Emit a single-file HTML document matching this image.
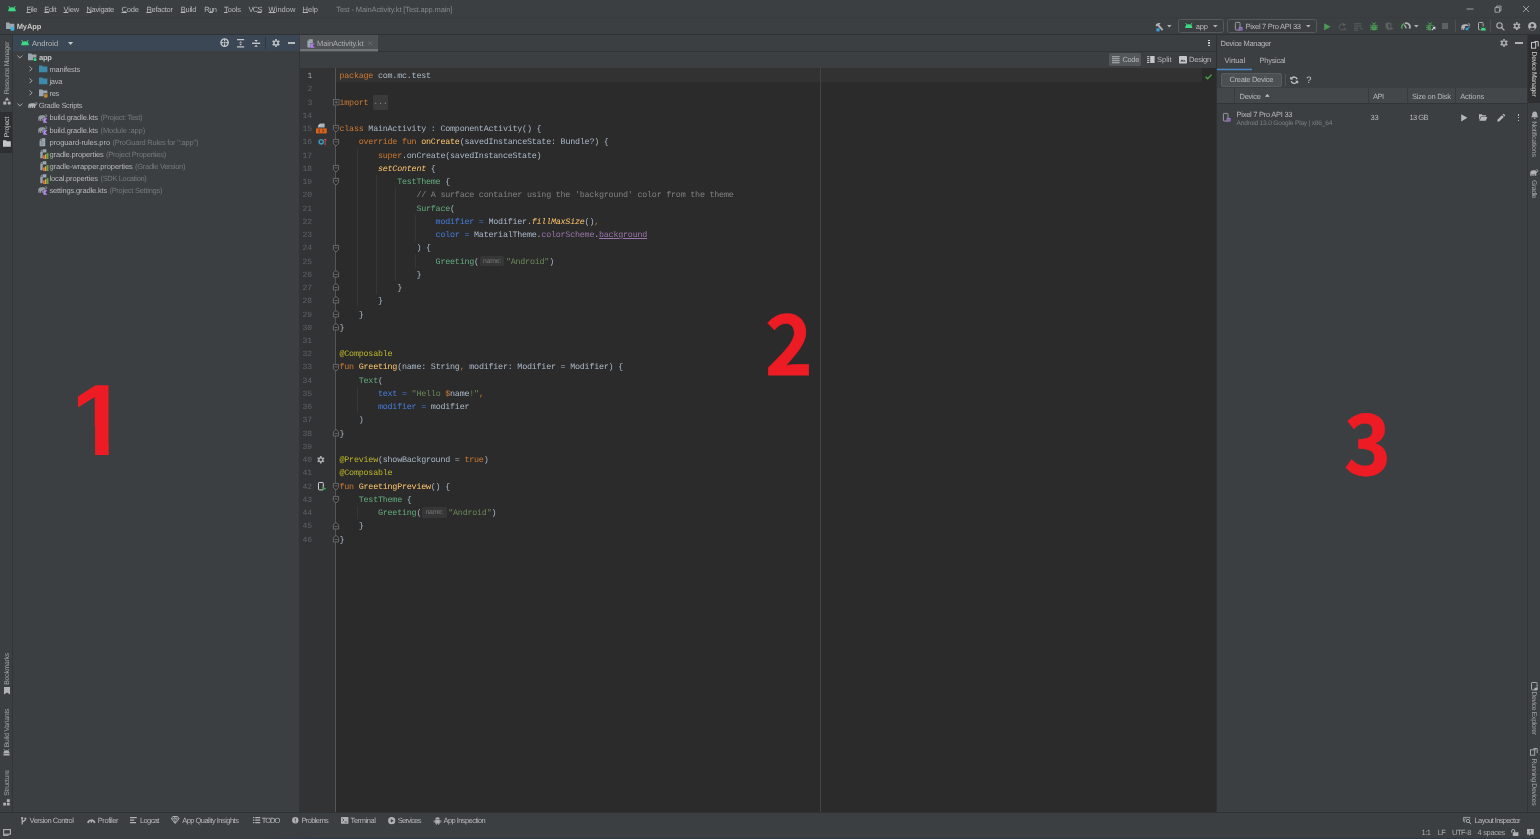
<!DOCTYPE html>
<html lang="en"><head><meta charset="utf-8"><title>Test - MainActivity.kt [Test.app.main]</title>
<style>
html,body{margin:0;padding:0}
body{width:1540px;height:839px;overflow:hidden;position:relative;background:#3c3f41;color:#b6b8ba;font:7.5px 'Liberation Sans',sans-serif;text-rendering:geometricPrecision;-webkit-font-smoothing:antialiased}
.t{position:absolute;white-space:pre}
svg{overflow:visible}
u{text-decoration-thickness:0.6px;text-underline-offset:0.4px}
</style></head><body>
<div id="root" style="position:absolute;left:0;top:0;width:1540px;height:839px;will-change:transform">
<div style="position:absolute;left:0px;top:34px;width:1540px;height:1px;background:#2f3233;"></div>
<div style="position:absolute;left:0px;top:17px;width:1540px;height:0.8px;background:#393c3e;"></div>
<div style="position:absolute;left:12px;top:35px;width:1px;height:777px;background:#323537;"></div>
<div style="position:absolute;left:13px;top:35px;width:286px;height:16px;background:#3b4754;"></div>
<div style="position:absolute;left:299px;top:51px;width:1px;height:761px;background:#323537;"></div>
<div style="position:absolute;left:300px;top:51px;width:916px;height:1px;background:#323537;"></div>
<div style="position:absolute;left:300px;top:68px;width:916px;height:744px;background:#2b2b2b;"></div>
<div style="position:absolute;left:300px;top:68px;width:35px;height:744px;background:#313335;"></div>
<div style="position:absolute;left:335px;top:68px;width:1px;height:744px;background:#555555;"></div>
<div style="position:absolute;left:336px;top:68px;width:866px;height:14px;background:#323232;"></div>
<div style="position:absolute;left:820px;top:68px;width:1px;height:744px;background:#434343;"></div>
<div style="position:absolute;left:1216px;top:35px;width:1px;height:777px;background:#2f3133;"></div>
<div style="position:absolute;left:1527px;top:35px;width:1px;height:777px;background:#323537;"></div>
<div style="position:absolute;left:0px;top:812px;width:1540px;height:1px;background:#2f3233;"></div>
<svg style="position:absolute;left:7.6px;top:5.9px;" width="8" height="5.5" viewBox="0 0 10 6.4" preserveAspectRatio="none"><path d="M0.3 6.2a4.7 4.7 0 0 1 9.4 0z" fill="#3ddc84"/><path d="M2.2 2.2L1.1 0.4M7.8 2.2L8.9 0.4" stroke="#3ddc84" stroke-width="1" stroke-linecap="round"/><circle cx="3" cy="4.2" r="0.32" fill="#3c3f41" opacity="0.6"/><circle cx="7" cy="4.2" r="0.32" fill="#3c3f41" opacity="0.6"/></svg>
<span class="t" style="left:26.50px;top:4.70px;line-height:10px;letter-spacing:-0.398px;"><u>F</u>ile</span>
<span class="t" style="left:44.30px;top:4.70px;line-height:10px;letter-spacing:-0.234px;"><u>E</u>dit</span>
<span class="t" style="left:63.50px;top:4.70px;line-height:10px;letter-spacing:-0.156px;"><u>V</u>iew</span>
<span class="t" style="left:86.40px;top:4.70px;line-height:10px;letter-spacing:-0.251px;"><u>N</u>avigate</span>
<span class="t" style="left:121.60px;top:4.70px;line-height:10px;letter-spacing:-0.209px;"><u>C</u>ode</span>
<span class="t" style="left:146.40px;top:4.70px;line-height:10px;letter-spacing:-0.257px;"><u>R</u>efactor</span>
<span class="t" style="left:180.70px;top:4.70px;line-height:10px;letter-spacing:-0.237px;"><u>B</u>uild</span>
<span class="t" style="left:204.30px;top:4.70px;line-height:10px;letter-spacing:-0.589px;">R<u>u</u>n</span>
<span class="t" style="left:224.00px;top:4.70px;line-height:10px;letter-spacing:-0.103px;"><u>T</u>ools</span>
<span class="t" style="left:248.50px;top:4.70px;line-height:10px;letter-spacing:-0.774px;">VC<u>S</u></span>
<span class="t" style="left:268.60px;top:4.70px;line-height:10px;letter-spacing:0.019px;"><u>W</u>indow</span>
<span class="t" style="left:302.60px;top:4.70px;line-height:10px;letter-spacing:-0.009px;"><u>H</u>elp</span>
<span class="t" style="left:336.30px;top:4.70px;line-height:10px;color:#85888a;letter-spacing:-0.125px;">Test - MainActivity.kt [Test.app.main]</span>
<svg style="position:absolute;left:1465.5px;top:5px;" width="8" height="8" viewBox="0 0 8 8" preserveAspectRatio="none"><path d="M0.5 4h7" stroke="#b4b6b8" stroke-width="0.8"/></svg>
<svg style="position:absolute;left:1493.5px;top:5px;" width="8" height="8" viewBox="0 0 8 8" preserveAspectRatio="none"><path d="M1 2.6h4.6v4.6H1zM2.4 2.6V1.1H7v4.6H5.6" fill="none" stroke="#b4b6b8" stroke-width="0.8"/></svg>
<svg style="position:absolute;left:1522px;top:5px;" width="8" height="8" viewBox="0 0 8 8" preserveAspectRatio="none"><path d="M1 1l6 6M7 1l-6 6" stroke="#b4b6b8" stroke-width="0.8"/></svg>
<svg style="position:absolute;left:5.8px;top:21.8px;" width="9" height="9" viewBox="0 0 9 9" preserveAspectRatio="none"><path d="M0 0.6h3.2l0.9 1.1H8.3v5.2H0z" fill="#9aa7b0"/><rect x="4.6" y="5" width="3.6" height="3.6" fill="#40b6e0"/></svg>
<span class="t" style="left:16.70px;top:21.80px;line-height:10px;color:#c8c8c8;font-weight:bold;letter-spacing:-0.080px;">MyApp</span>
<svg style="position:absolute;left:1153.5px;top:21.5px;" width="9.5" height="9.5" viewBox="0 0 9.5 9.5" preserveAspectRatio="none"><path d="M1.5 3.2C2.5 1.2 4.6 0.4 6.6 1.3L5.2 2.7L9.3 7.6L8 8.8L3.6 4L2.6 4.6z" fill="#afb1b3"/><rect x="2.4" y="6.2" width="3.2" height="3.2" fill="#389fd6"/></svg>
<svg style="position:absolute;left:1167.2px;top:25px;" width="4.6" height="2.6" viewBox="0 0 4.6 2.6" preserveAspectRatio="none"><path d="M0 0h4.6L2.3 2.6z" fill="#afb1b3"/></svg>
<div style="position:absolute;left:1178px;top:19.3px;width:43.8px;height:12.2px;border:0.8px solid #575a5c;border-radius:2.6px;background:#3c3f41"></div>
<svg style="position:absolute;left:1184.8px;top:22.8px;" width="7.6" height="5.2" viewBox="0 0 10 6.4" preserveAspectRatio="none"><path d="M0.3 6.2a4.7 4.7 0 0 1 9.4 0z" fill="#3ddc84"/><path d="M2.2 2.2L1.1 0.4M7.8 2.2L8.9 0.4" stroke="#3ddc84" stroke-width="1" stroke-linecap="round"/><circle cx="3" cy="4.2" r="0.32" fill="#3c3f41" opacity="0.6"/><circle cx="7" cy="4.2" r="0.32" fill="#3c3f41" opacity="0.6"/></svg>
<span class="t" style="left:1195.70px;top:21.60px;line-height:10px;letter-spacing:-0.105px;">app</span>
<svg style="position:absolute;left:1213.2px;top:25px;" width="4.6" height="2.6" viewBox="0 0 4.6 2.6" preserveAspectRatio="none"><path d="M0 0h4.6L2.3 2.6z" fill="#afb1b3"/></svg>
<div style="position:absolute;left:1227.2px;top:19.3px;width:87.6px;height:12.2px;border:0.8px solid #575a5c;border-radius:2.6px;background:#3c3f41"></div>
<svg style="position:absolute;left:1235px;top:21.8px;" width="8" height="9" viewBox="0 0 8 9" preserveAspectRatio="none"><rect x="0.4" y="0.4" width="4.6" height="7.6" rx="0.8" fill="none" stroke="#afb1b3" stroke-width="0.8"/><rect x="3.6" y="5" width="4" height="3.6" fill="#9876c8"/><path d="M4.4 6.9h2.4" stroke="#3c3f41" stroke-width="0.5"/></svg>
<span class="t" style="left:1245.50px;top:21.60px;line-height:10px;letter-spacing:-0.292px;">Pixel 7 Pro API 33</span>
<svg style="position:absolute;left:1305.8px;top:25px;" width="4.6" height="2.6" viewBox="0 0 4.6 2.6" preserveAspectRatio="none"><path d="M0 0h4.6L2.3 2.6z" fill="#afb1b3"/></svg>
<svg style="position:absolute;left:1324px;top:22.6px;" width="7" height="7.4" viewBox="0 0 7 7.4" preserveAspectRatio="none"><path d="M0.2 0.2L6.6 3.7L0.2 7.2z" fill="#499c54"/></svg>
<svg style="position:absolute;left:1338px;top:22px;" width="9" height="9" viewBox="0 0 9 9" preserveAspectRatio="none"><path d="M6.5 3.2A3 3 0 1 0 6.8 6.2" fill="none" stroke="#5e6163" stroke-width="0.9"/><path d="M5 0.8L7.8 2.6L5.2 4.4z" fill="#5e6163"/><path d="M6 8.6l1.2-2.6l1.2 2.6" fill="none" stroke="#5e6163" stroke-width="0.6"/></svg>
<svg style="position:absolute;left:1354.3px;top:22.5px;" width="8.5" height="8" viewBox="0 0 8.5 8" preserveAspectRatio="none"><path d="M0 0.8h7.6M0 3h7.6M0 5.2h4.6M0 7.2h4" stroke="#5e6163" stroke-width="0.9"/><path d="M6 5.2h2v2" fill="none" stroke="#5e6163" stroke-width="0.7"/></svg>
<svg style="position:absolute;left:1369.8px;top:21.8px;" width="8" height="8.6" viewBox="0 0 8 8.6" preserveAspectRatio="none"><path d="M2.2 0.3l1 1.2M5.8 0.3l-1 1.2" stroke="#499c54" stroke-width="0.8"/><path d="M2.3 2.6a1.7 1.5 0 0 1 3.4 0z" fill="#499c54"/><rect x="1.3" y="2.9" width="5.4" height="5.5" rx="2.4" fill="#499c54"/><path d="M0.1 3.6h1.6M6.3 3.6h1.6M0 5.6h1.6M6.4 5.6h1.6M0.3 7.8l1.4-0.7M7.7 7.8l-1.4-0.7" stroke="#499c54" stroke-width="0.9"/><path d="M2.9 4.5h2.2M2.9 6.2h2.2" stroke="#3c3f41" stroke-width="0.6" opacity="0.7"/></svg>
<svg style="position:absolute;left:1385px;top:22px;" width="9" height="9" viewBox="0 0 9 9" preserveAspectRatio="none"><path d="M0.5 1.2L3.5 0.2L6.4 1.2V4.8Q6.2 7 3.5 8.2Q0.7 7 0.5 4.8z" fill="#5e6163"/><path d="M3.5 1.6L5.2 2.2V4.6Q5 5.8 3.5 6.6z" fill="#3c3f41"/><path d="M5.2 4.4L8.8 6.6L5.2 8.8z" fill="#5e6163" stroke="#3c3f41" stroke-width="0.4"/></svg>
<svg style="position:absolute;left:1401px;top:22.2px;" width="9.4" height="7.4" viewBox="0 0 9.4 7.4" preserveAspectRatio="none"><path d="M1.1 6.6A3.7 3.7 0 0 1 3.3 1.5" fill="none" stroke="#499c54" stroke-width="1.7"/><path d="M3.9 1.3A3.7 3.7 0 0 1 8.4 6.6" fill="none" stroke="#afb1b3" stroke-width="1.7"/><path d="M3.4 2.6L5.4 6.4" stroke="#afb1b3" stroke-width="1.2"/></svg>
<svg style="position:absolute;left:1414.2px;top:25px;" width="4.6" height="2.6" viewBox="0 0 4.6 2.6" preserveAspectRatio="none"><path d="M0 0h4.6L2.3 2.6z" fill="#afb1b3"/></svg>
<svg style="position:absolute;left:1425.7px;top:21.8px;" width="8" height="8.6" viewBox="0 0 8 8.6" preserveAspectRatio="none"><path d="M2.2 0.3l1 1.2M5.8 0.3l-1 1.2" stroke="#499c54" stroke-width="0.8"/><path d="M2.3 2.6a1.7 1.5 0 0 1 3.4 0z" fill="#499c54"/><rect x="1.3" y="2.9" width="5.4" height="5.5" rx="2.4" fill="#499c54"/><path d="M0.1 3.6h1.6M6.3 3.6h1.6M0 5.6h1.6M6.4 5.6h1.6M0.3 7.8l1.4-0.7M7.7 7.8l-1.4-0.7" stroke="#499c54" stroke-width="0.9"/><path d="M2.9 4.5h2.2M2.9 6.2h2.2" stroke="#3c3f41" stroke-width="0.6" opacity="0.7"/></svg>
<svg style="position:absolute;left:1430.6px;top:26px;" width="5" height="5" viewBox="0 0 5 5" preserveAspectRatio="none"><rect width="5" height="5" fill="#3c3f41"/><path d="M0.8 4.2L3.4 1.6" stroke="#d4d6d8" stroke-width="1.1"/><path d="M1.4 0.8h3v3z" fill="#d4d6d8"/></svg>
<div style="position:absolute;left:1442.2px;top:23px;width:6px;height:6px;background:#5e6163;"></div>
<div style="position:absolute;left:1455px;top:19.8px;width:0.9px;height:11.8px;background:#4d5052;"></div>
<svg style="position:absolute;left:1460.8px;top:22.6px;" width="9.6" height="7.2" viewBox="0 0 10 8" preserveAspectRatio="none"><path d="M0.3 7.4V4.2C0.3 2.4 1.7 1.4 3.6 1.4H5.2C6.6 1.4 7.6 2 7.9 3.2C8.1 4 7.9 4.6 7.3 4.8V7.4H5.9V5.6H5.2V7.4H3.9V5.6H3.2V7.4H1.9V5.6H1.5V7.4z" fill="#afb1b3"/><path d="M7 3.6C8.3 3.8 9.2 3 9.2 2C9.2 1 8.3 0.5 7.6 0.9" fill="none" stroke="#afb1b3" stroke-width="0.9" stroke-linecap="round"/></svg>
<svg style="position:absolute;left:1465.4px;top:26.4px;" width="5.2" height="4.6" viewBox="0 0 5.2 4.6" preserveAspectRatio="none"><rect width="5.2" height="4.6" fill="#3c3f41"/><path d="M4.6 0.6L1.4 3.6" stroke="#389fd6" stroke-width="1.3"/><path d="M0.6 1.2v3h3.4z" fill="#389fd6"/></svg>
<svg style="position:absolute;left:1477.8px;top:22px;" width="8" height="8.6" viewBox="0 0 8 8.6" preserveAspectRatio="none"><rect x="0.5" y="0.5" width="4.6" height="7.2" rx="0.8" fill="none" stroke="#afb1b3" stroke-width="1"/><rect x="2.2" y="4.4" width="5.8" height="4.2" fill="#3c3f41"/><path d="M2.8 8.4a2.5 2.6 0 0 1 5 0z" fill="#3ddc84"/><path d="M3.6 6.2L3.1 5.3M7 6.2L7.5 5.3" stroke="#3ddc84" stroke-width="0.5"/></svg>
<div style="position:absolute;left:1490.4px;top:19.8px;width:0.9px;height:11.8px;background:#4d5052;"></div>
<svg style="position:absolute;left:1496.4px;top:21.8px;" width="9" height="9" viewBox="0 0 9 9" preserveAspectRatio="none"><circle cx="3.5" cy="3.5" r="2.7" fill="none" stroke="#afb1b3" stroke-width="1.1"/><path d="M5.5 5.5L8.4 8.4" stroke="#afb1b3" stroke-width="1.3"/></svg>
<svg style="position:absolute;left:1512.6px;top:21.9px;" width="7.6" height="8.2" viewBox="0 0 9.2 9.2" preserveAspectRatio="none"><g transform="translate(4.6 4.6)"><circle r="2.45" fill="none" stroke="#afb1b3" stroke-width="1.7"/><rect x="-1" y="-4.5" width="2" height="1.7" fill="#afb1b3" transform="rotate(0)"/><rect x="-1" y="-4.5" width="2" height="1.7" fill="#afb1b3" transform="rotate(60)"/><rect x="-1" y="-4.5" width="2" height="1.7" fill="#afb1b3" transform="rotate(120)"/><rect x="-1" y="-4.5" width="2" height="1.7" fill="#afb1b3" transform="rotate(180)"/><rect x="-1" y="-4.5" width="2" height="1.7" fill="#afb1b3" transform="rotate(240)"/><rect x="-1" y="-4.5" width="2" height="1.7" fill="#afb1b3" transform="rotate(300)"/></g></svg>
<svg style="position:absolute;left:1527.6px;top:21.8px;" width="8.6" height="8.6" viewBox="0 0 8.6 8.6" preserveAspectRatio="none"><circle cx="4.3" cy="4.3" r="4.2" fill="#afb1b3"/><circle cx="4.3" cy="3.2" r="1.5" fill="#3c3f41"/><path d="M1.5 6.9C2.2 5.4 6.4 5.4 7.1 6.9A3.8 3.8 0 0 1 1.5 6.9z" fill="#3c3f41"/></svg>
<span class="t" style="left:-18.05px;top:63.25px;width:52.50px;line-height:10px;transform:rotate(-90deg);transform-origin:50% 50%;font-size:6.9px;color:#a3a5a7;letter-spacing:-0.382px;">Resource Manager</span>
<svg style="position:absolute;left:2.9px;top:96.9px;" width="7.2" height="6.8" viewBox="0 0 7.2 6.8" preserveAspectRatio="none"><path d="M4 0.3L6.2 3.6H1.8z" fill="#afb1b3"/><rect x="0.3" y="4.6" width="3" height="3" fill="#afb1b3"/><circle cx="6.2" cy="6.1" r="1.6" fill="#afb1b3"/></svg>
<div style="position:absolute;left:0px;top:112px;width:12px;height:41px;background:#2d2f30;"></div>
<span class="t" style="left:-1.95px;top:122.35px;width:20.30px;line-height:10px;transform:rotate(-90deg);transform-origin:50% 50%;font-size:6.9px;color:#d0d0d0;letter-spacing:-0.165px;">Project</span>
<svg style="position:absolute;left:3px;top:140px;" width="7" height="5.8" viewBox="0 0 7 5.8" preserveAspectRatio="none"><path d="M0 0.3h3l0.9 1H7.8v5.4H0z" fill="#c4c6c8"/></svg>
<span class="t" style="left:-7.60px;top:663.80px;width:31.60px;line-height:10px;transform:rotate(-90deg);transform-origin:50% 50%;font-size:6.9px;color:#a3a5a7;letter-spacing:-0.319px;">Bookmarks</span>
<svg style="position:absolute;left:3.6px;top:686.6px;" width="6" height="7.6" viewBox="0 0 6 7.6" preserveAspectRatio="none"><path d="M0 0h6v7.4L3 5.4L0 7.4z" fill="#afb1b3"/></svg>
<span class="t" style="left:-11.05px;top:722.55px;width:38.50px;line-height:10px;transform:rotate(-90deg);transform-origin:50% 50%;font-size:6.9px;color:#a3a5a7;letter-spacing:-0.251px;">Build Variants</span>
<svg style="position:absolute;left:3.2px;top:748.8px;" width="7" height="6.6" viewBox="0 0 7 6.6" preserveAspectRatio="none"><path d="M1 0.2L2 1.6M6 0.2L5 1.6" stroke="#afb1b3" stroke-width="0.8"/><path d="M0.5 4.2a3 3 0 0 1 6 0z" fill="#afb1b3"/><rect x="0.5" y="4.7" width="6" height="1.8" fill="#afb1b3"/></svg>
<span class="t" style="left:-4.60px;top:777.60px;width:25.60px;line-height:10px;transform:rotate(-90deg);transform-origin:50% 50%;font-size:6.9px;color:#a3a5a7;letter-spacing:-0.263px;">Structure</span>
<svg style="position:absolute;left:3.4px;top:798.8px;" width="7" height="6.6" viewBox="0 0 7 6.6" preserveAspectRatio="none"><rect x="3.9" y="0.2" width="2.8" height="2.8" fill="#afb1b3"/><rect x="0.2" y="3.7" width="2.8" height="2.8" fill="#afb1b3"/><rect x="3.9" y="3.7" width="2.8" height="2.8" fill="#afb1b3"/></svg>
<svg style="position:absolute;left:21px;top:40.2px;" width="8" height="5.4" viewBox="0 0 10 6.4" preserveAspectRatio="none"><path d="M0.3 6.2a4.7 4.7 0 0 1 9.4 0z" fill="#3ddc84"/><path d="M2.2 2.2L1.1 0.4M7.8 2.2L8.9 0.4" stroke="#3ddc84" stroke-width="1" stroke-linecap="round"/><circle cx="3" cy="4.2" r="0.32" fill="#3b4754" opacity="0.6"/><circle cx="7" cy="4.2" r="0.32" fill="#3b4754" opacity="0.6"/></svg>
<span class="t" style="left:32.00px;top:38.60px;line-height:10px;letter-spacing:0.063px;">Android</span>
<svg style="position:absolute;left:67.6px;top:42px;" width="5.2" height="3" viewBox="0 0 5.2 3" preserveAspectRatio="none"><path d="M0 0h5.2L2.6 3z" fill="#c4c6c8"/></svg>
<svg style="position:absolute;left:220px;top:38.2px;" width="9.2" height="9.2" viewBox="0 0 9.2 9.2" preserveAspectRatio="none"><circle cx="4.6" cy="4.6" r="3.7" fill="none" stroke="#c4c7c9" stroke-width="1.3"/><circle cx="4.6" cy="4.6" r="1.1" fill="#c4c7c9"/><path d="M4.6 0.9v2.2M4.6 6.1v2.2M0.9 4.6h2.2M6.1 4.6h2.2" stroke="#c4c7c9" stroke-width="1.2"/></svg>
<svg style="position:absolute;left:237px;top:38.6px;" width="7.2" height="8.6" viewBox="0 0 7.2 8.6" preserveAspectRatio="none"><path d="M0 0.7h7.2M0 7.9h7.2" stroke="#c4c7c9" stroke-width="1.3"/><path d="M3.6 2.2L5 3.8H2.2zM3.6 6.4L5 4.8H2.2z" fill="#c4c7c9"/></svg>
<svg style="position:absolute;left:251.9px;top:38.6px;" width="8.2" height="8.6" viewBox="0 0 8.2 8.6" preserveAspectRatio="none"><path d="M0 4.3h8.2" stroke="#c4c7c9" stroke-width="1.4"/><path d="M4.1 2.9L5.9 0.9H2.3zM4.1 5.7L5.9 7.7H2.3z" fill="#c4c7c9"/></svg>
<div style="position:absolute;left:265.2px;top:36.8px;width:0.9px;height:12px;background:#303943;"></div>
<svg style="position:absolute;left:272px;top:38.6px;" width="8" height="8" viewBox="0 0 9.2 9.2" preserveAspectRatio="none"><g transform="translate(4.6 4.6)"><circle r="2.45" fill="none" stroke="#c4c7c9" stroke-width="1.7"/><rect x="-1" y="-4.5" width="2" height="1.7" fill="#c4c7c9" transform="rotate(0)"/><rect x="-1" y="-4.5" width="2" height="1.7" fill="#c4c7c9" transform="rotate(60)"/><rect x="-1" y="-4.5" width="2" height="1.7" fill="#c4c7c9" transform="rotate(120)"/><rect x="-1" y="-4.5" width="2" height="1.7" fill="#c4c7c9" transform="rotate(180)"/><rect x="-1" y="-4.5" width="2" height="1.7" fill="#c4c7c9" transform="rotate(240)"/><rect x="-1" y="-4.5" width="2" height="1.7" fill="#c4c7c9" transform="rotate(300)"/></g></svg>
<div style="position:absolute;left:287.9px;top:42.1px;width:7.4px;height:1.5px;background:#b6babd;"></div>
<svg style="position:absolute;left:17.1px;top:54.55px;" width="5.6" height="3.6" viewBox="0 0 5.6 3.6" preserveAspectRatio="none"><path d="M0.4 0.6L2.8 3L5.2 0.6" fill="none" stroke="#adb0b2" stroke-width="1"/></svg>
<svg style="position:absolute;left:28px;top:53.349999999999994px;" width="9" height="8.6" viewBox="0 0 9 8.6" preserveAspectRatio="none"><path d="M0 0.4h3.2l1 1.2H8.4v5.6H0z" fill="#9aa7b0"/><rect x="5" y="4.6" width="3.8" height="3.8" fill="#3c3f41"/><circle cx="7" cy="6.6" r="1.5" fill="#3ddc84"/></svg>
<span class="t" style="left:39.00px;top:53.05px;line-height:10px;color:#c8c8c8;font-weight:bold;letter-spacing:-0.215px;">app</span>
<svg style="position:absolute;left:28.7px;top:65.93499999999999px;" width="3.6" height="5.6" viewBox="0 0 3.6 5.6" preserveAspectRatio="none"><path d="M0.6 0.4L3 2.8L0.6 5.2" fill="none" stroke="#adb0b2" stroke-width="1"/></svg>
<svg style="position:absolute;left:38.8px;top:65.035px;" width="8.4" height="7.4" viewBox="0 0 8.4 7.4" preserveAspectRatio="none"><path d="M0 0.4h3.2l1 1.2H8.4v5.6H0z" fill="#3d8aaa"/></svg>
<span class="t" style="left:49.50px;top:65.13px;line-height:10px;letter-spacing:-0.179px;">manifests</span>
<svg style="position:absolute;left:28.7px;top:78.02px;" width="3.6" height="5.6" viewBox="0 0 3.6 5.6" preserveAspectRatio="none"><path d="M0.6 0.4L3 2.8L0.6 5.2" fill="none" stroke="#adb0b2" stroke-width="1"/></svg>
<svg style="position:absolute;left:38.8px;top:77.12px;" width="8.4" height="7.4" viewBox="0 0 8.4 7.4" preserveAspectRatio="none"><path d="M0 0.4h3.2l1 1.2H8.4v5.6H0z" fill="#3d8aaa"/></svg>
<span class="t" style="left:49.50px;top:77.22px;line-height:10px;letter-spacing:-0.316px;">java</span>
<svg style="position:absolute;left:28.7px;top:90.105px;" width="3.6" height="5.6" viewBox="0 0 3.6 5.6" preserveAspectRatio="none"><path d="M0.6 0.4L3 2.8L0.6 5.2" fill="none" stroke="#adb0b2" stroke-width="1"/></svg>
<svg style="position:absolute;left:38.8px;top:89.105px;" width="9" height="8.8" viewBox="0 0 9 8.8" preserveAspectRatio="none"><path d="M0 0.4h3.2l1 1.2H8.4v5.6H0z" fill="#9aa7b0"/><rect x="4.6" y="4" width="4" height="4.6" fill="#3c3f41"/><rect x="5.2" y="4.6" width="3.2" height="4" fill="#c9902f"/><path d="M5.2 5.8h3.2" stroke="#8a5f1a" stroke-width="0.6"/></svg>
<span class="t" style="left:49.50px;top:89.31px;line-height:10px;letter-spacing:-0.307px;">res</span>
<svg style="position:absolute;left:17.1px;top:102.89px;" width="5.6" height="3.6" viewBox="0 0 5.6 3.6" preserveAspectRatio="none"><path d="M0.4 0.6L2.8 3L5.2 0.6" fill="none" stroke="#adb0b2" stroke-width="1"/></svg>
<svg style="position:absolute;left:27.5px;top:102.49px;overflow:visible" width="9.8" height="6.6" viewBox="0 0 10 8" preserveAspectRatio="none"><path d="M0.3 7.4V4.2C0.3 2.4 1.7 1.4 3.6 1.4H5.2C6.6 1.4 7.6 2 7.9 3.2C8.1 4 7.9 4.6 7.3 4.8V7.4H5.9V5.6H5.2V7.4H3.9V5.6H3.2V7.4H1.9V5.6H1.5V7.4z" fill="#aeb1b3"/><path d="M7 3.6C8.3 3.8 9.2 3 9.2 2C9.2 1 8.3 0.5 7.6 0.9" fill="none" stroke="#aeb1b3" stroke-width="0.9" stroke-linecap="round"/></svg>
<span class="t" style="left:38.80px;top:101.39px;line-height:10px;letter-spacing:-0.288px;">Gradle Scripts</span>
<svg style="position:absolute;left:38.2px;top:113.77499999999999px;" width="9.6" height="9" viewBox="0 0 10 10" preserveAspectRatio="none"><path d="M0.3 7.4V4.2C0.3 2.4 1.7 1.4 3.6 1.4H5.2C6.6 1.4 7.6 2 7.9 3.2C8.1 4 7.9 4.6 7.3 4.8V7.4H5.9V5.6H5.2V7.4H3.9V5.6H3.2V7.4H1.9V5.6H1.5V7.4z" fill="#929a9f"/><path d="M7 3.6C8.3 3.8 9.2 3 9.2 2C9.2 1 8.3 0.5 7.6 0.9" fill="none" stroke="#929a9f" stroke-width="0.9" stroke-linecap="round"/><rect x="5" y="4.2" width="5" height="5.8" fill="#3c3f41"/><path d="M5.6 4.8v4.8h4.2L7.6 7.2L9.8 4.8z" fill="#b98af5"/></svg>
<span class="t" style="left:49.50px;top:113.47px;line-height:10px;letter-spacing:-0.128px;">build.gradle.kts</span>
<span class="t" style="left:100.60px;top:113.47px;line-height:10px;color:#76797b;letter-spacing:-0.302px;">(Project: Test)</span>
<svg style="position:absolute;left:38.2px;top:125.86px;" width="9.6" height="9" viewBox="0 0 10 10" preserveAspectRatio="none"><path d="M0.3 7.4V4.2C0.3 2.4 1.7 1.4 3.6 1.4H5.2C6.6 1.4 7.6 2 7.9 3.2C8.1 4 7.9 4.6 7.3 4.8V7.4H5.9V5.6H5.2V7.4H3.9V5.6H3.2V7.4H1.9V5.6H1.5V7.4z" fill="#929a9f"/><path d="M7 3.6C8.3 3.8 9.2 3 9.2 2C9.2 1 8.3 0.5 7.6 0.9" fill="none" stroke="#929a9f" stroke-width="0.9" stroke-linecap="round"/><rect x="5" y="4.2" width="5" height="5.8" fill="#3c3f41"/><path d="M5.6 4.8v4.8h4.2L7.6 7.2L9.8 4.8z" fill="#b98af5"/></svg>
<span class="t" style="left:49.50px;top:125.56px;line-height:10px;letter-spacing:-0.128px;">build.gradle.kts</span>
<span class="t" style="left:100.60px;top:125.56px;line-height:10px;color:#76797b;letter-spacing:-0.145px;">(Module :app)</span>
<svg style="position:absolute;left:39.4px;top:137.64499999999998px;" width="6.8" height="8.6" viewBox="0 0 7.4 9" preserveAspectRatio="none"><path d="M2.9 0.3H6.8V8.7H0.6V2.7H2.9z" fill="#9aa7b0"/><path d="M2.3 0.5V2.1H0.8z" fill="#9aa7b0"/><path d="M2 4h3.4M2 5.4h3.4M2 6.8h2.4" stroke="#7a8084" stroke-width="0.7"/></svg>
<span class="t" style="left:49.50px;top:137.64px;line-height:10px;letter-spacing:-0.067px;">proguard-rules.pro</span>
<span class="t" style="left:112.40px;top:137.64px;line-height:10px;color:#76797b;letter-spacing:-0.216px;">(ProGuard Rules for ":app")</span>
<svg style="position:absolute;left:39.6px;top:149.33px;" width="8.6" height="10" viewBox="0 0 8.6 10" preserveAspectRatio="none"><path d="M2.7 0.2H6.4V3.4H2.7V9.2H0.3V2.6H2.7z" fill="#9aa7b0"/><path d="M2.1 0.5V2H0.6z" fill="#9aa7b0"/><rect x="3.1" y="6.4" width="1.6" height="3.6" fill="#e8703a"/><rect x="4.9" y="5.2" width="1.6" height="4.8" fill="#e0a845"/><rect x="6.8" y="3.9" width="1.7" height="6.1" fill="#62a84c"/></svg>
<span class="t" style="left:49.50px;top:149.73px;line-height:10px;letter-spacing:-0.129px;">gradle.properties</span>
<span class="t" style="left:106.00px;top:149.73px;line-height:10px;color:#76797b;letter-spacing:-0.230px;">(Project Properties)</span>
<svg style="position:absolute;left:39.6px;top:161.415px;" width="8.6" height="10" viewBox="0 0 8.6 10" preserveAspectRatio="none"><path d="M2.7 0.2H6.4V3.4H2.7V9.2H0.3V2.6H2.7z" fill="#9aa7b0"/><path d="M2.1 0.5V2H0.6z" fill="#9aa7b0"/><rect x="3.1" y="6.4" width="1.6" height="3.6" fill="#e8703a"/><rect x="4.9" y="5.2" width="1.6" height="4.8" fill="#e0a845"/><rect x="6.8" y="3.9" width="1.7" height="6.1" fill="#62a84c"/></svg>
<span class="t" style="left:49.50px;top:161.81px;line-height:10px;letter-spacing:-0.091px;">gradle-wrapper.properties</span>
<span class="t" style="left:135.00px;top:161.81px;line-height:10px;color:#76797b;letter-spacing:-0.276px;">(Gradle Version)</span>
<svg style="position:absolute;left:39.6px;top:173.5px;" width="8.6" height="10" viewBox="0 0 8.6 10" preserveAspectRatio="none"><path d="M2.7 0.2H6.4V3.4H2.7V9.2H0.3V2.6H2.7z" fill="#9aa7b0"/><path d="M2.1 0.5V2H0.6z" fill="#9aa7b0"/><rect x="3.1" y="6.4" width="1.6" height="3.6" fill="#e8703a"/><rect x="4.9" y="5.2" width="1.6" height="4.8" fill="#e0a845"/><rect x="6.8" y="3.9" width="1.7" height="6.1" fill="#62a84c"/></svg>
<span class="t" style="left:49.50px;top:173.90px;line-height:10px;letter-spacing:-0.154px;">local.properties</span>
<span class="t" style="left:100.60px;top:173.90px;line-height:10px;color:#76797b;letter-spacing:-0.361px;">(SDK Location)</span>
<svg style="position:absolute;left:38.2px;top:186.28500000000003px;" width="9.6" height="9" viewBox="0 0 10 10" preserveAspectRatio="none"><path d="M0.3 7.4V4.2C0.3 2.4 1.7 1.4 3.6 1.4H5.2C6.6 1.4 7.6 2 7.9 3.2C8.1 4 7.9 4.6 7.3 4.8V7.4H5.9V5.6H5.2V7.4H3.9V5.6H3.2V7.4H1.9V5.6H1.5V7.4z" fill="#929a9f"/><path d="M7 3.6C8.3 3.8 9.2 3 9.2 2C9.2 1 8.3 0.5 7.6 0.9" fill="none" stroke="#929a9f" stroke-width="0.9" stroke-linecap="round"/><rect x="5" y="4.2" width="5" height="5.8" fill="#3c3f41"/><path d="M5.6 4.8v4.8h4.2L7.6 7.2L9.8 4.8z" fill="#b98af5"/></svg>
<span class="t" style="left:49.50px;top:185.99px;line-height:10px;letter-spacing:-0.155px;">settings.gradle.kts</span>
<span class="t" style="left:109.40px;top:185.99px;line-height:10px;color:#76797b;letter-spacing:-0.263px;">(Project Settings)</span>
<div style="position:absolute;left:300px;top:35px;width:77.8px;height:16.5px;background:#4e5254;"></div>
<div style="position:absolute;left:300px;top:49.4px;width:77.8px;height:1.7px;background:#70757a;"></div>
<svg style="position:absolute;left:306.8px;top:38.6px;" width="8" height="9" viewBox="0 0 8 9" preserveAspectRatio="none"><path d="M0.4 1.8L2.2 0.2h3.6V4H3.4V8.4H0.4z" fill="#9aa7b0"/><path d="M2.2 0.2V1.8H0.4" fill="#6e767c"/><path d="M3.4 4.4h4.4L5.6 6.6L7.8 8.8H3.4z" fill="#b57bf0"/></svg>
<span class="t" style="left:317.00px;top:38.60px;line-height:10px;color:#adafb1;letter-spacing:-0.058px;">MainActivity.kt</span>
<svg style="position:absolute;left:368px;top:41px;" width="4.6" height="4.6" viewBox="0 0 4.6 4.6" preserveAspectRatio="none"><path d="M0.5 0.5l3.6 3.6M4.1 0.5L0.5 4.1" stroke="#75787a" stroke-width="0.7"/></svg>
<div style="position:absolute;left:1208.4px;top:39.6px;width:1.4px;height:1.4px;background:#c4c6c8;"></div>
<div style="position:absolute;left:1208.4px;top:42.2px;width:1.4px;height:1.4px;background:#c4c6c8;"></div>
<div style="position:absolute;left:1208.4px;top:44.800000000000004px;width:1.4px;height:1.4px;background:#c4c6c8;"></div>
<div style="position:absolute;left:1109px;top:53.2px;width:32.2px;height:12.8px;background:#53575a;border-radius:1.6px"></div>
<svg style="position:absolute;left:1112.4px;top:55.8px;" width="7.6" height="7.4" viewBox="0 0 7.6 7.4" preserveAspectRatio="none"><path d="M0 0.7h7.6M0 2.7h7.6M0 4.7h7.6M0 6.7h7.6" stroke="#b4b6b8" stroke-width="1.1"/></svg>
<span class="t" style="left:1122.50px;top:55.30px;line-height:10px;letter-spacing:-0.359px;">Code</span>
<svg style="position:absolute;left:1147.4px;top:56px;" width="7.6" height="7.2" viewBox="0 0 7.6 7.2" preserveAspectRatio="none"><rect x="3.2" y="0" width="4.4" height="7" fill="#c4c6c8"/><path d="M0 0.7h2.4M0 2.7h2.4M0 4.7h2.4M0 6.5h2.4" stroke="#c4c6c8" stroke-width="1"/></svg>
<span class="t" style="left:1157.00px;top:55.30px;line-height:10px;letter-spacing:-0.019px;">Split</span>
<svg style="position:absolute;left:1179px;top:55.8px;" width="8" height="7.6" viewBox="0 0 8 7.6" preserveAspectRatio="none"><rect x="0" y="0" width="8" height="7.6" rx="0.8" fill="#c4c6c8"/><path d="M1.2 5.6L3 3.4L4.4 4.8L5.4 4L6.8 5.6z" fill="#3c3f41"/></svg>
<span class="t" style="left:1189.00px;top:55.30px;line-height:10px;letter-spacing:-0.227px;">Design</span>
<svg style="position:absolute;left:1204.7px;top:73.6px;" width="7.2" height="5.6" viewBox="0 0 7.2 5.6" preserveAspectRatio="none"><path d="M0.6 2.8L2.6 4.8L6.6 0.6" fill="none" stroke="#4aa84a" stroke-width="1.3"/></svg>
<span class="t" style="left:307.38px;top:70.10px;line-height:13px;font-size:8.03px;color:#a4a3a3;font-family:'Liberation Mono',monospace;">1</span>
<span class="t" style="left:307.38px;top:83.34px;line-height:13px;font-size:8.03px;color:#606366;font-family:'Liberation Mono',monospace;">2</span>
<span class="t" style="left:307.38px;top:96.59px;line-height:13px;font-size:8.03px;color:#606366;font-family:'Liberation Mono',monospace;">3</span>
<span class="t" style="left:302.56px;top:109.83px;line-height:13px;font-size:8.03px;color:#606366;font-family:'Liberation Mono',monospace;letter-spacing:0.008px;">14</span>
<span class="t" style="left:302.56px;top:123.08px;line-height:13px;font-size:8.03px;color:#606366;font-family:'Liberation Mono',monospace;letter-spacing:0.008px;">15</span>
<span class="t" style="left:302.56px;top:136.32px;line-height:13px;font-size:8.03px;color:#606366;font-family:'Liberation Mono',monospace;letter-spacing:0.008px;">16</span>
<span class="t" style="left:302.56px;top:149.57px;line-height:13px;font-size:8.03px;color:#606366;font-family:'Liberation Mono',monospace;letter-spacing:0.008px;">17</span>
<span class="t" style="left:302.56px;top:162.81px;line-height:13px;font-size:8.03px;color:#606366;font-family:'Liberation Mono',monospace;letter-spacing:0.008px;">18</span>
<span class="t" style="left:302.56px;top:176.06px;line-height:13px;font-size:8.03px;color:#606366;font-family:'Liberation Mono',monospace;letter-spacing:0.008px;">19</span>
<span class="t" style="left:302.56px;top:189.30px;line-height:13px;font-size:8.03px;color:#606366;font-family:'Liberation Mono',monospace;letter-spacing:0.008px;">20</span>
<span class="t" style="left:302.56px;top:202.55px;line-height:13px;font-size:8.03px;color:#606366;font-family:'Liberation Mono',monospace;letter-spacing:0.008px;">21</span>
<span class="t" style="left:302.56px;top:215.79px;line-height:13px;font-size:8.03px;color:#606366;font-family:'Liberation Mono',monospace;letter-spacing:0.008px;">22</span>
<span class="t" style="left:302.56px;top:229.04px;line-height:13px;font-size:8.03px;color:#606366;font-family:'Liberation Mono',monospace;letter-spacing:0.008px;">23</span>
<span class="t" style="left:302.56px;top:242.28px;line-height:13px;font-size:8.03px;color:#606366;font-family:'Liberation Mono',monospace;letter-spacing:0.008px;">24</span>
<span class="t" style="left:302.56px;top:255.53px;line-height:13px;font-size:8.03px;color:#606366;font-family:'Liberation Mono',monospace;letter-spacing:0.008px;">25</span>
<span class="t" style="left:302.56px;top:268.77px;line-height:13px;font-size:8.03px;color:#606366;font-family:'Liberation Mono',monospace;letter-spacing:0.008px;">26</span>
<span class="t" style="left:302.56px;top:282.02px;line-height:13px;font-size:8.03px;color:#606366;font-family:'Liberation Mono',monospace;letter-spacing:0.008px;">27</span>
<span class="t" style="left:302.56px;top:295.26px;line-height:13px;font-size:8.03px;color:#606366;font-family:'Liberation Mono',monospace;letter-spacing:0.008px;">28</span>
<span class="t" style="left:302.56px;top:308.51px;line-height:13px;font-size:8.03px;color:#606366;font-family:'Liberation Mono',monospace;letter-spacing:0.008px;">29</span>
<span class="t" style="left:302.56px;top:321.75px;line-height:13px;font-size:8.03px;color:#606366;font-family:'Liberation Mono',monospace;letter-spacing:0.008px;">30</span>
<span class="t" style="left:302.56px;top:335.00px;line-height:13px;font-size:8.03px;color:#606366;font-family:'Liberation Mono',monospace;letter-spacing:0.008px;">31</span>
<span class="t" style="left:302.56px;top:348.25px;line-height:13px;font-size:8.03px;color:#606366;font-family:'Liberation Mono',monospace;letter-spacing:0.008px;">32</span>
<span class="t" style="left:302.56px;top:361.49px;line-height:13px;font-size:8.03px;color:#606366;font-family:'Liberation Mono',monospace;letter-spacing:0.008px;">33</span>
<span class="t" style="left:302.56px;top:374.74px;line-height:13px;font-size:8.03px;color:#606366;font-family:'Liberation Mono',monospace;letter-spacing:0.008px;">34</span>
<span class="t" style="left:302.56px;top:387.98px;line-height:13px;font-size:8.03px;color:#606366;font-family:'Liberation Mono',monospace;letter-spacing:0.008px;">35</span>
<span class="t" style="left:302.56px;top:401.23px;line-height:13px;font-size:8.03px;color:#606366;font-family:'Liberation Mono',monospace;letter-spacing:0.008px;">36</span>
<span class="t" style="left:302.56px;top:414.47px;line-height:13px;font-size:8.03px;color:#606366;font-family:'Liberation Mono',monospace;letter-spacing:0.008px;">37</span>
<span class="t" style="left:302.56px;top:427.71px;line-height:13px;font-size:8.03px;color:#606366;font-family:'Liberation Mono',monospace;letter-spacing:0.008px;">38</span>
<span class="t" style="left:302.56px;top:440.96px;line-height:13px;font-size:8.03px;color:#606366;font-family:'Liberation Mono',monospace;letter-spacing:0.008px;">39</span>
<span class="t" style="left:302.56px;top:454.20px;line-height:13px;font-size:8.03px;color:#606366;font-family:'Liberation Mono',monospace;letter-spacing:0.008px;">40</span>
<span class="t" style="left:302.56px;top:467.45px;line-height:13px;font-size:8.03px;color:#606366;font-family:'Liberation Mono',monospace;letter-spacing:0.008px;">41</span>
<span class="t" style="left:302.56px;top:480.69px;line-height:13px;font-size:8.03px;color:#606366;font-family:'Liberation Mono',monospace;letter-spacing:0.008px;">42</span>
<span class="t" style="left:302.56px;top:493.94px;line-height:13px;font-size:8.03px;color:#606366;font-family:'Liberation Mono',monospace;letter-spacing:0.008px;">43</span>
<span class="t" style="left:302.56px;top:507.19px;line-height:13px;font-size:8.03px;color:#606366;font-family:'Liberation Mono',monospace;letter-spacing:0.008px;">44</span>
<span class="t" style="left:302.56px;top:520.43px;line-height:13px;font-size:8.03px;color:#606366;font-family:'Liberation Mono',monospace;letter-spacing:0.008px;">45</span>
<span class="t" style="left:302.56px;top:533.68px;line-height:13px;font-size:8.03px;color:#606366;font-family:'Liberation Mono',monospace;letter-spacing:0.008px;">46</span>
<div style="font:8.4px 'Liberation Mono',monospace;color:#a9b7c6;letter-spacing:-0.2208px"><div style="position:absolute;left:339.5px;top:70.10px;height:13px;line-height:13px;white-space:pre"><span style="color:#cc7832;">package</span> com.mc.test</div>
<div style="position:absolute;left:339.5px;top:96.59px;height:13px;line-height:13px;white-space:pre"><span style="color:#cc7832;">import</span> <span style="color:#a9b7c6;background:#3a3a3a;color:#8c8c8c;padding:2.3px 0;">...</span></div>
<div style="position:absolute;left:339.5px;top:123.08px;height:13px;line-height:13px;white-space:pre"><span style="color:#cc7832;">class</span> MainActivity : ComponentActivity() {</div>
<div style="position:absolute;left:339.5px;top:136.32px;height:13px;line-height:13px;white-space:pre">    <span style="color:#cc7832;">override fun</span> <span style="color:#ffc66d;">onCreate</span>(savedInstanceState: Bundle?) {</div>
<div style="position:absolute;left:339.5px;top:149.57px;height:13px;line-height:13px;white-space:pre">        <span style="color:#cc7832;">super</span>.onCreate(savedInstanceState)</div>
<div style="position:absolute;left:339.5px;top:162.81px;height:13px;line-height:13px;white-space:pre">        <span style="color:#ffc66d;font-style:italic;">setContent</span> {</div>
<div style="position:absolute;left:339.5px;top:176.06px;height:13px;line-height:13px;white-space:pre">            <span style="color:#62a87c;">TestTheme</span> {</div>
<div style="position:absolute;left:339.5px;top:189.30px;height:13px;line-height:13px;white-space:pre">                <span style="color:#808080;">// A surface container using the 'background' color from the theme</span></div>
<div style="position:absolute;left:339.5px;top:202.55px;height:13px;line-height:13px;white-space:pre">                <span style="color:#62a87c;">Surface</span>(</div>
<div style="position:absolute;left:339.5px;top:215.79px;height:13px;line-height:13px;white-space:pre">                    <span style="color:#467cda;">modifier =</span> Modifier.<span style="color:#ffc66d;font-style:italic;">fillMaxSize</span>()<span style="color:#cc7832;">,</span></div>
<div style="position:absolute;left:339.5px;top:229.04px;height:13px;line-height:13px;white-space:pre">                    <span style="color:#467cda;">color =</span> MaterialTheme.<span style="color:#9876aa;">colorScheme</span>.<span style="color:#9876aa;text-decoration:underline;text-decoration-thickness:0.6px;text-underline-offset:1px;">background</span></div>
<div style="position:absolute;left:339.5px;top:242.28px;height:13px;line-height:13px;white-space:pre">                ) {</div>
<div style="position:absolute;left:339.5px;top:255.53px;height:13px;line-height:13px;white-space:pre">                    <span style="color:#62a87c;">Greeting</span>(<span style="display:inline-block;width:27.0px;height:10.4px;vertical-align:middle;position:relative;top:-0.6px"><span style="position:absolute;left:1px;top:0;width:24.4px;height:10.4px;background:#363636;border-radius:1.8px;font:6.9px 'Liberation Sans',sans-serif;line-height:12.6px;color:#747678;text-align:center;letter-spacing:-0.25px">name:</span></span><span style="color:#6a8759;">"Android"</span>)</div>
<div style="position:absolute;left:339.5px;top:268.77px;height:13px;line-height:13px;white-space:pre">                }</div>
<div style="position:absolute;left:339.5px;top:282.02px;height:13px;line-height:13px;white-space:pre">            }</div>
<div style="position:absolute;left:339.5px;top:295.26px;height:13px;line-height:13px;white-space:pre">        }</div>
<div style="position:absolute;left:339.5px;top:308.51px;height:13px;line-height:13px;white-space:pre">    }</div>
<div style="position:absolute;left:339.5px;top:321.75px;height:13px;line-height:13px;white-space:pre">}</div>
<div style="position:absolute;left:339.5px;top:348.25px;height:13px;line-height:13px;white-space:pre"><span style="color:#bbb529;">@Composable</span></div>
<div style="position:absolute;left:339.5px;top:361.49px;height:13px;line-height:13px;white-space:pre"><span style="color:#cc7832;">fun</span> <span style="color:#ffc66d;">Greeting</span>(name: String<span style="color:#cc7832;">,</span> modifier: Modifier = Modifier) {</div>
<div style="position:absolute;left:339.5px;top:374.74px;height:13px;line-height:13px;white-space:pre">    <span style="color:#62a87c;">Text</span>(</div>
<div style="position:absolute;left:339.5px;top:387.98px;height:13px;line-height:13px;white-space:pre">        <span style="color:#467cda;">text =</span> <span style="color:#6a8759;">"Hello </span><span style="color:#cc7832;">$</span>name<span style="color:#6a8759;">!"</span><span style="color:#cc7832;">,</span></div>
<div style="position:absolute;left:339.5px;top:401.23px;height:13px;line-height:13px;white-space:pre">        <span style="color:#467cda;">modifier =</span> modifier</div>
<div style="position:absolute;left:339.5px;top:414.47px;height:13px;line-height:13px;white-space:pre">    )</div>
<div style="position:absolute;left:339.5px;top:427.71px;height:13px;line-height:13px;white-space:pre">}</div>
<div style="position:absolute;left:339.5px;top:454.20px;height:13px;line-height:13px;white-space:pre"><span style="color:#bbb529;">@Preview</span>(showBackground = <span style="color:#cc7832;">true</span>)</div>
<div style="position:absolute;left:339.5px;top:467.45px;height:13px;line-height:13px;white-space:pre"><span style="color:#bbb529;">@Composable</span></div>
<div style="position:absolute;left:339.5px;top:480.69px;height:13px;line-height:13px;white-space:pre"><span style="color:#cc7832;">fun</span> <span style="color:#ffc66d;">GreetingPreview</span>() {</div>
<div style="position:absolute;left:339.5px;top:493.94px;height:13px;line-height:13px;white-space:pre">    <span style="color:#62a87c;">TestTheme</span> {</div>
<div style="position:absolute;left:339.5px;top:507.19px;height:13px;line-height:13px;white-space:pre">        <span style="color:#62a87c;">Greeting</span>(<span style="display:inline-block;width:27.0px;height:10.4px;vertical-align:middle;position:relative;top:-0.6px"><span style="position:absolute;left:1px;top:0;width:24.4px;height:10.4px;background:#363636;border-radius:1.8px;font:6.9px 'Liberation Sans',sans-serif;line-height:12.6px;color:#747678;text-align:center;letter-spacing:-0.25px">name:</span></span><span style="color:#6a8759;">"Android"</span>)</div>
<div style="position:absolute;left:339.5px;top:520.43px;height:13px;line-height:13px;white-space:pre">    }</div>
<div style="position:absolute;left:339.5px;top:533.68px;height:13px;line-height:13px;white-space:pre">}</div></div>
<div style="position:absolute;left:356.5px;top:148.3475px;width:1px;height:158.93999999999997px;background:#373737;"></div>
<div style="position:absolute;left:376.0px;top:174.83749999999998px;width:1px;height:119.20499999999998px;background:#373737;"></div>
<div style="position:absolute;left:395.0px;top:188.08249999999998px;width:1px;height:92.71499999999997px;background:#373737;"></div>
<div style="position:absolute;left:414.5px;top:214.5725px;width:1px;height:26.49000000000001px;background:#373737;"></div>
<div style="position:absolute;left:414.5px;top:254.30749999999995px;width:1px;height:13.245000000000005px;background:#373737;"></div>
<div style="position:absolute;left:356.5px;top:386.7575px;width:1px;height:26.49000000000001px;background:#373737;"></div>
<div style="position:absolute;left:356.5px;top:505.96250000000003px;width:1px;height:13.244999999999948px;background:#373737;"></div>
<svg style="position:absolute;left:332.9px;top:98.99px;" width="6.4" height="6.4" viewBox="0 0 6.4 6.4" preserveAspectRatio="none"><rect x="0.4" y="0.4" width="5.6" height="5.6" fill="#2b2b2b" stroke="#77797b" stroke-width="0.7"/><path d="M1.6 3.2h3.2M3.2 1.6v3.2" stroke="#77797b" stroke-width="0.7"/></svg>
<svg style="position:absolute;left:333px;top:125.47999999999999px;" width="6" height="7.4" viewBox="0 0 6 7.4" preserveAspectRatio="none"><path d="M0.4 0.4h5.2v4.2L3 7L0.4 4.6z" fill="#2b2b2b" stroke="#77797b" stroke-width="0.8"/><path d="M1.6 2.9h2.8" stroke="#77797b" stroke-width="0.8"/></svg>
<svg style="position:absolute;left:333px;top:138.725px;" width="6" height="7.4" viewBox="0 0 6 7.4" preserveAspectRatio="none"><path d="M0.4 0.4h5.2v4.2L3 7L0.4 4.6z" fill="#2b2b2b" stroke="#77797b" stroke-width="0.8"/><path d="M1.6 2.9h2.8" stroke="#77797b" stroke-width="0.8"/></svg>
<svg style="position:absolute;left:333px;top:165.21499999999997px;" width="6" height="7.4" viewBox="0 0 6 7.4" preserveAspectRatio="none"><path d="M0.4 0.4h5.2v4.2L3 7L0.4 4.6z" fill="#2b2b2b" stroke="#77797b" stroke-width="0.8"/><path d="M1.6 2.9h2.8" stroke="#77797b" stroke-width="0.8"/></svg>
<svg style="position:absolute;left:333px;top:178.45999999999998px;" width="6" height="7.4" viewBox="0 0 6 7.4" preserveAspectRatio="none"><path d="M0.4 0.4h5.2v4.2L3 7L0.4 4.6z" fill="#2b2b2b" stroke="#77797b" stroke-width="0.8"/><path d="M1.6 2.9h2.8" stroke="#77797b" stroke-width="0.8"/></svg>
<svg style="position:absolute;left:333px;top:244.685px;" width="6" height="7.4" viewBox="0 0 6 7.4" preserveAspectRatio="none"><path d="M0.4 0.4h5.2v4.2L3 7L0.4 4.6z" fill="#2b2b2b" stroke="#77797b" stroke-width="0.8"/><path d="M1.6 2.9h2.8" stroke="#77797b" stroke-width="0.8"/></svg>
<svg style="position:absolute;left:333px;top:363.89px;" width="6" height="7.4" viewBox="0 0 6 7.4" preserveAspectRatio="none"><path d="M0.4 0.4h5.2v4.2L3 7L0.4 4.6z" fill="#2b2b2b" stroke="#77797b" stroke-width="0.8"/><path d="M1.6 2.9h2.8" stroke="#77797b" stroke-width="0.8"/></svg>
<svg style="position:absolute;left:333px;top:483.09499999999997px;" width="6" height="7.4" viewBox="0 0 6 7.4" preserveAspectRatio="none"><path d="M0.4 0.4h5.2v4.2L3 7L0.4 4.6z" fill="#2b2b2b" stroke="#77797b" stroke-width="0.8"/><path d="M1.6 2.9h2.8" stroke="#77797b" stroke-width="0.8"/></svg>
<svg style="position:absolute;left:333px;top:496.34px;" width="6" height="7.4" viewBox="0 0 6 7.4" preserveAspectRatio="none"><path d="M0.4 0.4h5.2v4.2L3 7L0.4 4.6z" fill="#2b2b2b" stroke="#77797b" stroke-width="0.8"/><path d="M1.6 2.9h2.8" stroke="#77797b" stroke-width="0.8"/></svg>
<svg style="position:absolute;left:333px;top:269.97499999999997px;" width="6" height="7.4" viewBox="0 0 6 7.4" preserveAspectRatio="none"><path d="M0.4 7h5.2v-4.2L3 0.4L0.4 2.8z" fill="#2b2b2b" stroke="#77797b" stroke-width="0.8"/><path d="M1.6 4.5h2.8" stroke="#77797b" stroke-width="0.8"/></svg>
<svg style="position:absolute;left:333px;top:283.21999999999997px;" width="6" height="7.4" viewBox="0 0 6 7.4" preserveAspectRatio="none"><path d="M0.4 7h5.2v-4.2L3 0.4L0.4 2.8z" fill="#2b2b2b" stroke="#77797b" stroke-width="0.8"/><path d="M1.6 4.5h2.8" stroke="#77797b" stroke-width="0.8"/></svg>
<svg style="position:absolute;left:333px;top:296.465px;" width="6" height="7.4" viewBox="0 0 6 7.4" preserveAspectRatio="none"><path d="M0.4 7h5.2v-4.2L3 0.4L0.4 2.8z" fill="#2b2b2b" stroke="#77797b" stroke-width="0.8"/><path d="M1.6 4.5h2.8" stroke="#77797b" stroke-width="0.8"/></svg>
<svg style="position:absolute;left:333px;top:309.71px;" width="6" height="7.4" viewBox="0 0 6 7.4" preserveAspectRatio="none"><path d="M0.4 7h5.2v-4.2L3 0.4L0.4 2.8z" fill="#2b2b2b" stroke="#77797b" stroke-width="0.8"/><path d="M1.6 4.5h2.8" stroke="#77797b" stroke-width="0.8"/></svg>
<svg style="position:absolute;left:333px;top:322.955px;" width="6" height="7.4" viewBox="0 0 6 7.4" preserveAspectRatio="none"><path d="M0.4 7h5.2v-4.2L3 0.4L0.4 2.8z" fill="#2b2b2b" stroke="#77797b" stroke-width="0.8"/><path d="M1.6 4.5h2.8" stroke="#77797b" stroke-width="0.8"/></svg>
<svg style="position:absolute;left:333px;top:428.91499999999996px;" width="6" height="7.4" viewBox="0 0 6 7.4" preserveAspectRatio="none"><path d="M0.4 7h5.2v-4.2L3 0.4L0.4 2.8z" fill="#2b2b2b" stroke="#77797b" stroke-width="0.8"/><path d="M1.6 4.5h2.8" stroke="#77797b" stroke-width="0.8"/></svg>
<svg style="position:absolute;left:333px;top:521.6299999999999px;" width="6" height="7.4" viewBox="0 0 6 7.4" preserveAspectRatio="none"><path d="M0.4 7h5.2v-4.2L3 0.4L0.4 2.8z" fill="#2b2b2b" stroke="#77797b" stroke-width="0.8"/><path d="M1.6 4.5h2.8" stroke="#77797b" stroke-width="0.8"/></svg>
<svg style="position:absolute;left:333px;top:534.875px;" width="6" height="7.4" viewBox="0 0 6 7.4" preserveAspectRatio="none"><path d="M0.4 7h5.2v-4.2L3 0.4L0.4 2.8z" fill="#2b2b2b" stroke="#77797b" stroke-width="0.8"/><path d="M1.6 4.5h2.8" stroke="#77797b" stroke-width="0.8"/></svg>
<svg style="position:absolute;left:316.3px;top:123.07999999999998px;" width="10.8" height="10.6" viewBox="0 0 10.8 10.6" preserveAspectRatio="none"><path d="M1.6 4.6C1.8 2.6 3 0.4 5 0.4H8.6V4.6z" fill="#a9b4bd"/><path d="M3 3l1.6-1" stroke="#e8eaec" stroke-width="0.8"/><rect x="0" y="5.4" width="10.8" height="5" fill="#d9621f"/><path d="M3.9 6.6L2.5 7.9L3.9 9.2M6.3 6.6L7.7 7.9L6.3 9.2" stroke="#4a2412" stroke-width="0.9" fill="none"/></svg>
<svg style="position:absolute;left:317.6px;top:138.125px;" width="8.6" height="7.6" viewBox="0 0 8.6 7.6" preserveAspectRatio="none"><circle cx="3.2" cy="3.8" r="2.9" fill="#3e94b8"/><circle cx="3.2" cy="3.8" r="1.3" fill="#313335"/><path d="M7.2 7.4V1M5.8 2.4L7.2 0.8L8.6 2.4" stroke="#e05555" stroke-width="0.8" fill="none"/></svg>
<svg style="position:absolute;left:317.2px;top:455.705px;" width="7.6" height="7.6" viewBox="0 0 9.2 9.2" preserveAspectRatio="none"><g transform="translate(4.6 4.6)"><circle r="2.45" fill="none" stroke="#afb1b3" stroke-width="1.7"/><rect x="-1" y="-4.5" width="2" height="1.7" fill="#afb1b3" transform="rotate(0)"/><rect x="-1" y="-4.5" width="2" height="1.7" fill="#afb1b3" transform="rotate(60)"/><rect x="-1" y="-4.5" width="2" height="1.7" fill="#afb1b3" transform="rotate(120)"/><rect x="-1" y="-4.5" width="2" height="1.7" fill="#afb1b3" transform="rotate(180)"/><rect x="-1" y="-4.5" width="2" height="1.7" fill="#afb1b3" transform="rotate(240)"/><rect x="-1" y="-4.5" width="2" height="1.7" fill="#afb1b3" transform="rotate(300)"/></g></svg>
<svg style="position:absolute;left:317.8px;top:481.695px;" width="8.6" height="9" viewBox="0 0 8.6 9" preserveAspectRatio="none"><rect x="0.5" y="0.5" width="4.8" height="7.4" rx="0.7" fill="#313335" stroke="#d0d2d4" stroke-width="1"/><path d="M4.4 4.4L8.4 6.6L4.4 8.8z" fill="#499c54"/></svg>
<span class="t" style="left:1220.60px;top:38.60px;line-height:10px;letter-spacing:-0.301px;">Device Manager</span>
<svg style="position:absolute;left:1500px;top:38.8px;" width="8" height="8" viewBox="0 0 9.2 9.2" preserveAspectRatio="none"><g transform="translate(4.6 4.6)"><circle r="2.45" fill="none" stroke="#afb1b3" stroke-width="1.7"/><rect x="-1" y="-4.5" width="2" height="1.7" fill="#afb1b3" transform="rotate(0)"/><rect x="-1" y="-4.5" width="2" height="1.7" fill="#afb1b3" transform="rotate(60)"/><rect x="-1" y="-4.5" width="2" height="1.7" fill="#afb1b3" transform="rotate(120)"/><rect x="-1" y="-4.5" width="2" height="1.7" fill="#afb1b3" transform="rotate(180)"/><rect x="-1" y="-4.5" width="2" height="1.7" fill="#afb1b3" transform="rotate(240)"/><rect x="-1" y="-4.5" width="2" height="1.7" fill="#afb1b3" transform="rotate(300)"/></g></svg>
<div style="position:absolute;left:1515.4px;top:42.3px;width:7.4px;height:1.4px;background:#afb1b3;"></div>
<span class="t" style="left:1224.60px;top:55.50px;line-height:10px;letter-spacing:-0.104px;">Virtual</span>
<span class="t" style="left:1259.60px;top:55.50px;line-height:10px;letter-spacing:-0.292px;">Physical</span>
<div style="position:absolute;left:1217px;top:69px;width:35px;height:1px;background:#4a88c7;"></div>
<div style="position:absolute;left:1217px;top:68px;width:35px;height:1px;background:rgba(74,136,199,0.3);"></div>
<div style="position:absolute;left:1217px;top:70px;width:35px;height:1px;background:rgba(74,136,199,0.2);"></div>
<div style="position:absolute;left:1221.2px;top:72.5px;width:58.6px;height:12.9px;border:0.8px solid #585c5e;border-radius:2px;background:#4c5052"></div>
<span class="t" style="left:1229.60px;top:75.40px;line-height:10px;letter-spacing:-0.318px;">Create Device</span>
<div style="position:absolute;left:1285.2px;top:73.6px;width:0.8px;height:12px;background:#515456;"></div>
<svg style="position:absolute;left:1290px;top:75.6px;" width="8.4" height="8.4" viewBox="0 0 8.4 8.4" preserveAspectRatio="none"><path d="M7.2 3.2A3.2 3.2 0 0 0 1.4 2.6M1.2 5.2A3.2 3.2 0 0 0 7 5.8" fill="none" stroke="#c4c6c8" stroke-width="1.3"/><path d="M0.2 0.6v3h3zM8.2 7.8V4.8H5.2z" fill="#c4c6c8"/></svg>
<span class="t" style="left:1306.20px;top:75.30px;line-height:10px;font-size:9.4px;color:#c4c6c8;">?</span>
<div style="position:absolute;left:1217px;top:88.4px;width:310px;height:14.6px;background:#43474a;"></div>
<div style="position:absolute;left:1217px;top:103.2px;width:310px;height:0.8px;background:#323537;"></div>
<div style="position:absolute;left:1234.4px;top:88.4px;width:0.8px;height:14.6px;background:#393c3e;"></div>
<div style="position:absolute;left:1368px;top:88.4px;width:0.8px;height:14.6px;background:#393c3e;"></div>
<div style="position:absolute;left:1407px;top:88.4px;width:0.8px;height:14.6px;background:#393c3e;"></div>
<div style="position:absolute;left:1455px;top:88.4px;width:0.8px;height:14.6px;background:#393c3e;"></div>
<span class="t" style="left:1239.60px;top:91.60px;line-height:10px;letter-spacing:-0.323px;">Device</span>
<svg style="position:absolute;left:1265.4px;top:94.4px;" width="4.6" height="2.8" viewBox="0 0 4.6 2.8" preserveAspectRatio="none"><path d="M0 2.8h4.6L2.3 0z" fill="#c4c6c8"/></svg>
<span class="t" style="left:1373.00px;top:91.60px;line-height:10px;letter-spacing:-0.498px;">API</span>
<span class="t" style="left:1412.00px;top:91.60px;line-height:10px;letter-spacing:-0.241px;">Size on Disk</span>
<span class="t" style="left:1460.20px;top:91.60px;line-height:10px;letter-spacing:-0.087px;">Actions</span>
<svg style="position:absolute;left:1223.4px;top:113.4px;" width="8.4" height="9" viewBox="0 0 8.4 9" preserveAspectRatio="none"><rect x="0.4" y="0.4" width="4.6" height="7.6" rx="0.8" fill="none" stroke="#afb1b3" stroke-width="0.8"/><rect x="3.6" y="5" width="4" height="3.6" fill="#9876c8"/><path d="M4.4 6.9h2.4" stroke="#3c3f41" stroke-width="0.5"/></svg>
<span class="t" style="left:1236.60px;top:109.70px;line-height:10px;letter-spacing:-0.270px;">Pixel 7 Pro API 33</span>
<span class="t" style="left:1236.60px;top:119.00px;line-height:10px;font-size:6.6px;color:#7d8082;letter-spacing:-0.199px;">Android 13.0 Google Play | x86_64</span>
<span class="t" style="left:1370.60px;top:113.20px;line-height:10px;letter-spacing:-0.372px;">33</span>
<span class="t" style="left:1409.40px;top:113.20px;line-height:10px;letter-spacing:-0.533px;">13 GB</span>
<svg style="position:absolute;left:1461px;top:113.8px;" width="6.6" height="7.6" viewBox="0 0 6.6 7.6" preserveAspectRatio="none"><path d="M0.2 0.2L6.4 3.8L0.2 7.4z" fill="#b6b8ba"/></svg>
<svg style="position:absolute;left:1479px;top:114.2px;" width="8.6" height="7" viewBox="0 0 8.6 7" preserveAspectRatio="none"><path d="M0 0.2h2.8l0.8 1H7v1.2H1.8L0 6.2z" fill="#b6b8ba"/><path d="M2.2 3h6.2L6.8 6.8H0.4z" fill="#b6b8ba"/></svg>
<svg style="position:absolute;left:1496.6px;top:113.6px;" width="8" height="8" viewBox="0 0 8 8" preserveAspectRatio="none"><path d="M0.4 7.6V5.8L5 1.2L6.8 3L2.2 7.6zM5.6 0.6L6.2 0a0.6 0.6 0 0 1 0.8 0L8 1a0.6 0.6 0 0 1 0 0.8L7.4 2.4z" fill="#b6b8ba"/></svg>
<div style="position:absolute;left:1517.7px;top:114.2px;width:1.4px;height:1.4px;background:#b6b8ba;"></div>
<div style="position:absolute;left:1517.7px;top:116.9px;width:1.4px;height:1.4px;background:#b6b8ba;"></div>
<div style="position:absolute;left:1517.7px;top:119.60000000000001px;width:1.4px;height:1.4px;background:#b6b8ba;"></div>
<div style="position:absolute;left:1528px;top:35px;width:12px;height:68.4px;background:#2d2f30;"></div>
<svg style="position:absolute;left:1530.5px;top:41.2px;" width="7.2" height="7.6" viewBox="0 0 7.2 7.6" preserveAspectRatio="none"><rect x="0.5" y="1.6" width="4.2" height="5.6" fill="none" stroke="#d0d2d4" stroke-width="0.9"/><path d="M3.4 0.5h3.8v5" fill="none" stroke="#d0d2d4" stroke-width="0.9"/></svg>
<span class="t" style="left:1510.50px;top:69.00px;width:44.80px;line-height:10px;transform:rotate(90deg);transform-origin:50% 50%;font-size:6.9px;color:#d0d0d0;letter-spacing:-0.385px;">Device Manager</span>
<svg style="position:absolute;left:1531px;top:110.8px;" width="7.4" height="8" viewBox="0 0 7.4 8" preserveAspectRatio="none"><path d="M3.7 0.4C5.6 0.6 6.2 2 6.2 3.6C6.2 5 6.8 5.6 7.2 6.2H0.2C0.6 5.6 1.2 5 1.2 3.6C1.2 2 1.8 0.6 3.7 0.4z" fill="#afb1b3"/><circle cx="3.7" cy="7.2" r="0.8" fill="#afb1b3"/></svg>
<span class="t" style="left:1515.20px;top:133.70px;width:35.40px;line-height:10px;transform:rotate(90deg);transform-origin:50% 50%;font-size:6.9px;color:#a3a5a7;letter-spacing:-0.165px;">Notifications</span>
<svg style="position:absolute;left:1529.8px;top:169px;" width="8.6" height="7.2" viewBox="0 0 10 8" preserveAspectRatio="none"><path d="M0.3 7.4V4.2C0.3 2.4 1.7 1.4 3.6 1.4H5.2C6.6 1.4 7.6 2 7.9 3.2C8.1 4 7.9 4.6 7.3 4.8V7.4H5.9V5.6H5.2V7.4H3.9V5.6H3.2V7.4H1.9V5.6H1.5V7.4z" fill="#afb1b3"/><path d="M7 3.6C8.3 3.8 9.2 3 9.2 2C9.2 1 8.3 0.5 7.6 0.9" fill="none" stroke="#afb1b3" stroke-width="0.9" stroke-linecap="round"/></svg>
<span class="t" style="left:1523.90px;top:183.60px;width:18.00px;line-height:10px;transform:rotate(90deg);transform-origin:50% 50%;font-size:6.9px;color:#a3a5a7;letter-spacing:-0.448px;">Gradle</span>
<svg style="position:absolute;left:1530.6px;top:681.6px;" width="7" height="8.6" viewBox="0 0 7 8.6" preserveAspectRatio="none"><rect x="0.5" y="0.5" width="5.6" height="7.4" rx="0.6" fill="none" stroke="#afb1b3" stroke-width="0.9"/><path d="M3.4 5.8h3v2.4h-3z" fill="#afb1b3"/></svg>
<span class="t" style="left:1511.30px;top:708.40px;width:43.20px;line-height:10px;transform:rotate(90deg);transform-origin:50% 50%;font-size:6.9px;color:#a3a5a7;letter-spacing:-0.363px;">Device Explorer</span>
<svg style="position:absolute;left:1530.4px;top:748.4px;" width="7.6" height="7.6" viewBox="0 0 7.6 7.6" preserveAspectRatio="none"><rect x="0.5" y="1.8" width="4.2" height="5.4" fill="none" stroke="#afb1b3" stroke-width="0.9"/><path d="M3.4 0.5h3.8v4.6" fill="none" stroke="#afb1b3" stroke-width="0.9"/><path d="M5.2 0.2v2.2" stroke="#afb1b3" stroke-width="0.8"/></svg>
<span class="t" style="left:1509.50px;top:777.00px;width:46.80px;line-height:10px;transform:rotate(90deg);transform-origin:50% 50%;font-size:6.9px;color:#a3a5a7;letter-spacing:-0.353px;">Running Devices</span>
<svg style="position:absolute;left:20.6px;top:816.6px;" width="5.6" height="8" viewBox="0 0 5.6 8" preserveAspectRatio="none"><path d="M1.2 0.4v7.2M1.2 5.6C1.2 3.8 4.4 4.4 4.4 2.2" fill="none" stroke="#afb1b3" stroke-width="1.2"/><circle cx="1.2" cy="1.1" r="1.1" fill="#afb1b3"/><circle cx="4.4" cy="1.7" r="1.1" fill="#afb1b3"/></svg>
<span class="t" style="left:29.60px;top:816.00px;line-height:10px;letter-spacing:-0.499px;">Version Control</span>
<svg style="position:absolute;left:87.4px;top:817.2px;" width="8.6" height="6.4" viewBox="0 0 8.6 6.4" preserveAspectRatio="none"><path d="M0.9 6A3.5 3.5 0 0 1 7.7 6" fill="none" stroke="#afb1b3" stroke-width="1.6"/><path d="M3.8 5.8L5.6 2.6" stroke="#afb1b3" stroke-width="1.2"/></svg>
<span class="t" style="left:97.80px;top:816.00px;line-height:10px;letter-spacing:-0.446px;">Profiler</span>
<svg style="position:absolute;left:130px;top:817.4px;" width="7" height="6.4" viewBox="0 0 7 6.4" preserveAspectRatio="none"><path d="M0 0.7h6.8M0 3.2h4.2M0 5.7h6" stroke="#afb1b3" stroke-width="1.3"/></svg>
<span class="t" style="left:140.00px;top:816.00px;line-height:10px;letter-spacing:-0.622px;">Logcat</span>
<svg style="position:absolute;left:171.4px;top:816.4px;" width="8.4" height="8" viewBox="0 0 8.4 8" preserveAspectRatio="none"><path d="M1.8 0.5h4.8L8 2.7L4.2 7.5L0.4 2.7z" fill="none" stroke="#afb1b3" stroke-width="1"/><path d="M0.6 2.7h7.2M3 0.7L4.2 2.7L5.4 0.7M2.8 2.7L4.2 7M5.6 2.7L4.2 7" stroke="#afb1b3" stroke-width="0.7" fill="none"/></svg>
<span class="t" style="left:182.20px;top:816.00px;line-height:10px;letter-spacing:-0.525px;">App Quality Insights</span>
<svg style="position:absolute;left:252.6px;top:817.0px;" width="7.2" height="6.4" viewBox="0 0 7.2 6.4" preserveAspectRatio="none"><path d="M2.2 0.7h5M2.2 3.2h5M2.2 5.7h5" stroke="#afb1b3" stroke-width="1.2"/><path d="M0 0.7h1.3M0 3.2h1.3M0 5.7h1.3" stroke="#afb1b3" stroke-width="1.2"/></svg>
<span class="t" style="left:261.80px;top:816.00px;line-height:10px;letter-spacing:-1.033px;">TODO</span>
<svg style="position:absolute;left:292px;top:816.6px;" width="6.6" height="6.6" viewBox="0 0 6.6 6.6" preserveAspectRatio="none"><circle cx="3.3" cy="3.3" r="3.2" fill="#afb1b3"/><path d="M3.3 1.4v2.4M3.3 4.6v0.9" stroke="#3c3f41" stroke-width="0.9"/></svg>
<span class="t" style="left:301.40px;top:816.00px;line-height:10px;letter-spacing:-0.611px;">Problems</span>
<svg style="position:absolute;left:340.6px;top:816.6px;" width="7.4" height="6.8" viewBox="0 0 7.4 6.8" preserveAspectRatio="none"><rect width="7.4" height="6.8" rx="0.6" fill="#afb1b3"/><path d="M1.4 1.6L3 3L1.4 4.4M3.6 5h2.2" stroke="#3c3f41" stroke-width="0.8" fill="none"/></svg>
<span class="t" style="left:350.60px;top:816.00px;line-height:10px;letter-spacing:-0.443px;">Terminal</span>
<svg style="position:absolute;left:387.6px;top:816.6px;" width="7.4" height="7.4" viewBox="0 0 7.4 7.4" preserveAspectRatio="none"><circle cx="3.7" cy="3.7" r="3.6" fill="#afb1b3"/><path d="M2.8 2L5.8 3.7L2.8 5.4z" fill="#3c3f41"/></svg>
<span class="t" style="left:397.80px;top:816.00px;line-height:10px;letter-spacing:-0.721px;">Services</span>
<svg style="position:absolute;left:434px;top:816.6px;" width="7" height="8" viewBox="0 0 7 8" preserveAspectRatio="none"><path d="M1.2 2.6a2.3 2.3 0 0 1 4.6 0z" fill="#afb1b3"/><rect x="1.2" y="3" width="4.6" height="3.6" fill="#afb1b3"/><path d="M0.2 3.2v2.4M6.8 3.2v2.4M2.4 6.6v1.2M4.6 6.6v1.2" stroke="#afb1b3" stroke-width="0.8"/></svg>
<span class="t" style="left:443.60px;top:816.00px;line-height:10px;letter-spacing:-0.573px;">App Inspection</span>
<svg style="position:absolute;left:1463.2px;top:816.6px;" width="8.6" height="7.6" viewBox="0 0 8.6 7.6" preserveAspectRatio="none"><path d="M0.4 4.6V0.4h6.4v1.4" fill="none" stroke="#afb1b3" stroke-width="0.8"/><path d="M1.6 5.8V1.8h2" fill="none" stroke="#afb1b3" stroke-width="0.6"/><circle cx="5" cy="4" r="1.7" fill="none" stroke="#afb1b3" stroke-width="0.9"/><path d="M6.2 5.2L8.2 7.2" stroke="#afb1b3" stroke-width="1"/></svg>
<span class="t" style="left:1474.60px;top:816.00px;line-height:10px;letter-spacing:-0.641px;">Layout Inspector</span>
<svg style="position:absolute;left:3.2px;top:829.2px;" width="8" height="7" viewBox="0 0 8 7" preserveAspectRatio="none"><rect x="0.6" y="0.6" width="6.8" height="4.6" fill="none" stroke="#afb1b3" stroke-width="1.1"/><path d="M0 6.4h5.6" stroke="#afb1b3" stroke-width="1"/></svg>
<span class="t" style="left:1421.40px;top:828.40px;line-height:10px;color:#a9abad;letter-spacing:-0.413px;">1:1</span>
<span class="t" style="left:1437.80px;top:828.40px;line-height:10px;color:#a9abad;letter-spacing:-0.783px;">LF</span>
<span class="t" style="left:1452.00px;top:828.40px;line-height:10px;color:#a9abad;letter-spacing:-0.450px;">UTF-8</span>
<span class="t" style="left:1477.60px;top:828.40px;line-height:10px;color:#a9abad;letter-spacing:-0.329px;">4 spaces</span>
<svg style="position:absolute;left:1510.9px;top:829.2px;" width="7.6" height="7.2" viewBox="0 0 7.6 7.2" preserveAspectRatio="none"><rect x="1.8" y="3.2" width="5.6" height="3.8" fill="#afb1b3"/><path d="M0.7 3.6V2a1.5 1.5 0 0 1 3 0v1.2" fill="none" stroke="#afb1b3" stroke-width="1"/></svg>
<svg style="position:absolute;left:1526.8px;top:829.4px;" width="6.8" height="7" viewBox="0 0 6.8 7" preserveAspectRatio="none"><path d="M0 0h6.8v5.4H3.6L2 6.8V5.4H0z" fill="#afb1b3"/><path d="M3.4 1v2.2M3.4 3.8v0.8" stroke="#3c3f41" stroke-width="0.8"/></svg>
<div style="position:absolute;left:71.38px;top:369.88px;font:bold 101.45px/101.45px 'Liberation Sans',sans-serif;color:#ed1c24;transform:scaleX(1.0035);transform-origin:0 0;white-space:pre;height:101.45px;clip-path:polygon(0 0,0.3705em 0,0.3705em 1em,0.2365em 1em,0.2365em 0.55em,0 0.55em)">1</div>
<div style="position:absolute;left:765.16px;top:297.53px;font:bold 83.51px/83.51px 'Noto Sans CJK SC','Liberation Sans',sans-serif;color:#ed1c24;transform:scaleX(0.9699);transform-origin:0 0;white-space:pre;height:83.51px;-webkit-text-stroke:0.8px #ed1c24">2</div>
<div style="position:absolute;left:1343.71px;top:397.97px;font:bold 83.87px/83.87px 'Noto Sans CJK SC','Liberation Sans',sans-serif;color:#ed1c24;transform:scaleX(0.9491);transform-origin:0 0;white-space:pre;height:83.87px;-webkit-text-stroke:0.8px #ed1c24">3</div>
<div style="position:absolute;left:260px;top:838.4px;width:1280px;height:0.6px;background:linear-gradient(90deg,rgba(44,54,80,0) 0,rgba(44,54,80,0.85) 60px,rgba(44,54,80,0.85) 100%)"></div>
</div>
</body></html>
